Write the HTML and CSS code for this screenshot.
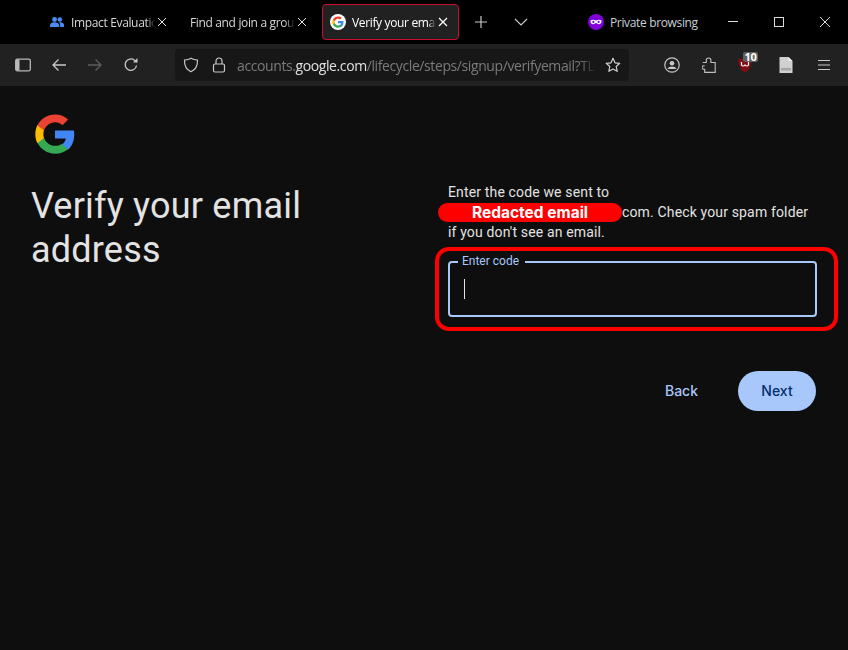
FILE: index.html
```html
<!DOCTYPE html>
<html lang="en">
<head>
    <meta charset="UTF-8">
    <title>Verify your email address</title>
    <link rel="stylesheet" href="styles.css">
</head>
<body>
    <div class="tabbar">
        <div class="tab tab-first">
            <svg class="tab-icon" width="14" height="13" viewBox="0 0 16 14"><circle cx="5.2" cy="3.6" r="2.8" fill="#4c8bf5"/><circle cx="11.2" cy="3.6" r="2.6" fill="#4c8bf5"/><path d="M0 12v-2c0-2 2.500-3.300 5.200-3.300S10.400 8 10.400 10v2z" fill="#4c8bf5"/><path d="M11.600 12v-2.200c0-1.200-.6-2.200-1.500-2.800.5-.2 1-.3 1.500-.3 2.200 0 4.400 1.200 4.400 3.100V12z" fill="#4c8bf5"/></svg>
            <span class="tab-title">Impact Evaluation</span>
            <svg class="tab-close" width="10" height="10" viewBox="0 0 10 10"><path d="M1 1l8 8M9 1l-8 8" stroke="#e6e6e6" stroke-width="1"/></svg>
        </div>
        <div class="tab tab-second">
            <span class="tab-title">Find and join a group</span>
            <svg class="tab-close" width="10" height="10" viewBox="0 0 10 10"><path d="M1 1l8 8M9 1l-8 8" stroke="#e6e6e6" stroke-width="1"/></svg>
        </div>
        <div class="tab tab-active">
            <span class="g-badge">
                <svg width="12" height="12" viewBox="0 0 48 48"><use href="#g-logo"/></svg>
            </span>
            <span class="tab-title">Verify your email</span>
            <svg class="tab-close" width="10" height="10" viewBox="0 0 10 10"><path d="M1 1l8 8M9 1l-8 8" stroke="#fff" stroke-width="1.200"/></svg>
        </div>
        <svg class="new-tab" width="14" height="14" viewBox="0 0 14 14"><path d="M7 1v12M1 7h12" stroke="#c8c8c8" stroke-width="1.200"/></svg>
        <svg class="tab-list" width="14" height="8" viewBox="0 0 14 8"><path d="M1 1l6 6 6-6" stroke="#c8c8c8" stroke-width="1.200" fill="none"/></svg>
        <div class="private">
            <svg width="16" height="16" viewBox="0 0 16 16"><circle cx="8" cy="8" r="8" fill="#8000d7"/><path d="M2.500 6.500c1.500-1 3.500-1 5.500 0 2-1 4-1 5.500 0 .3 2-.7 3.700-2.700 3.700-1.300 0-2-1.200-2.800-1.200s-1.500 1.200-2.800 1.200c-2 0-3-1.700-2.700-3.700z" fill="#fff"/><circle cx="5.400" cy="7.900" r="1.100" fill="#8000d7"/><circle cx="10.600" cy="7.900" r="1.100" fill="#8000d7"/></svg>
            <span>Private browsing</span>
        </div>
        <div class="window-controls">
            <svg width="12" height="12" viewBox="0 0 12 12"><path d="M1 5.500h10" stroke="#ddd" stroke-width="1"/></svg>
            <svg width="12" height="12" viewBox="0 0 12 12"><rect x="1.500" y="1.500" width="9" height="9" fill="none" stroke="#ddd" stroke-width="1"/></svg>
            <svg width="12" height="12" viewBox="0 0 12 12"><path d="M1 1l10 10M11 1L1 11" stroke="#ddd" stroke-width="1"/></svg>
        </div>
    </div>

    <div class="toolbar">
        <svg width="16" height="14" viewBox="0 0 16 14"><rect x=".7" y="1.200" width="14.600" height="11.600" rx="1.500" fill="none" stroke="#b8b8b8" stroke-width="1.300"/><rect x="1" y="1.500" width="3.500" height="11" fill="#b8b8b8"/></svg>
        <svg class="tool-back" width="16" height="14" viewBox="0 0 16 14"><path d="M15 7H2M7.500 1.500L2 7l5.500 5.500" stroke="#c8c8c8" stroke-width="1.300" fill="none"/></svg>
        <svg class="tool-forward" width="16" height="14" viewBox="0 0 16 14"><path d="M1 7h13M8.500 1.500L14 7l-5.500 5.500" stroke="#5c5c5c" stroke-width="1.300" fill="none"/></svg>
        <svg class="tool-reload" width="16" height="16" viewBox="0 0 16 16"><path d="M13.500 8.500A5.700 5.700 0 1 1 11.500 3.300L14 5" stroke="#c8c8c8" stroke-width="1.300" fill="none"/><path d="M14.500 1v4.500H10z" fill="#c8c8c8"/></svg>
        <div class="urlbar">
            <svg width="16" height="16" viewBox="0 0 16 16"><path d="M8 1.200c1.800 1.200 4 1.700 6.500 1.800.2 5.500-1.800 9.800-6.500 11.800C3.300 12.800 1.300 8.500 1.500 3 4 2.900 6.200 2.400 8 1.200z" fill="none" stroke="#c8c8c8" stroke-width="1.200"/></svg>
            <svg class="url-lock" width="14" height="16" viewBox="0 0 14 16"><rect x="1.500" y="7" width="11" height="8" rx="1.500" fill="none" stroke="#c8c8c8" stroke-width="1.200"/><path d="M4 7V4a3 3 0 0 1 6 0v3" fill="none" stroke="#c8c8c8" stroke-width="1.200"/></svg>
            <span class="url"><span class="url-dim">accounts.</span>google.com<span class="url-dim">/lifecycle/steps/signup/verifyemail?TL=AHE</span></span>
            <svg class="url-star" width="16" height="16" viewBox="0 0 16 16"><path d="M8 1.300l2 4.500 4.800.5-3.600 3.200 1 4.800L8 12l-4.200 2.300 1-4.800L1.200 6.300 6 5.800z" fill="none" stroke="#d0d0d0" stroke-width="1.200" stroke-linejoin="round"/></svg>
        </div>
        <div class="tool-right">
            <svg width="16" height="16" viewBox="0 0 16 16"><circle cx="8" cy="8" r="7.200" fill="none" stroke="#c8c8c8" stroke-width="1.200"/><circle cx="8" cy="6.300" r="2.300" fill="#c8c8c8"/><path d="M3.500 12c.7-1.700 2.400-2.500 4.500-2.500s3.800.8 4.500 2.500z" fill="#c8c8c8"/></svg>
            <svg class="tool-ext" width="14" height="16" viewBox="0 0 14 16"><path d="M.8 5.500h3.500V3.300a2.300 2.300 0 0 1 4.600 0v2.200h4.300V15.400H2.700v-3.200H1.500a1.800 1.800 0 0 1 0-3.500h1.200" fill="none" stroke="#c0c0c0" stroke-width="1.100"/></svg>
            <div class="ublock">
                <svg width="14" height="16" viewBox="0 0 14 16"><path d="M7 .5c2 1 4 1.500 6.500 1.500.3 6-1.500 11-6.500 13.500C2 13 .2 8 .5 2 3 2 5 1.500 7 .5z" fill="#800d14"/><path d="M3.500 5v2.500c0 1 .8 1.500 1.700 1.500S7 8.500 7 7.500c0 1 .9 1.500 1.800 1.500s1.700-.5 1.700-1.500V5" stroke="#fff" stroke-width="1.200" fill="none"/></svg>
                <span class="badge">10</span>
            </div>
            <svg class="tool-doc" width="14" height="16" viewBox="0 0 14 16"><path d="M.5 0h9l4 4v12H.5z" fill="#d0d0d0"/><path d="M9.500 0v4h4z" fill="#efefef"/><rect x="2" y="11" width="10" height="2.500" fill="#a5a5a5"/></svg>
            <svg class="tool-menu" width="12" height="12" viewBox="0 0 12 12"><path d="M0 1.500h12M0 6h12M0 10.500h12" stroke="#c8c8c8" stroke-width="1.200"/></svg>
        </div>
    </div>

    <svg class="defs" width="0" height="0">
        <defs>
            <g id="g-logo">
                <path fill="#4285f4" d="M46 24.500c0-1.600-.1-3.100-.4-4.500H24v9h12.400c-.5 2.900-2.100 5.300-4.500 6.900v5.800h7.300C43.500 37.700 46 31.700 46 24.500z"/>
                <path fill="#34a853" d="M24 46.500c6.100 0 11.200-2 14.900-5.500l-7.300-5.700c-2 1.400-4.600 2.200-7.600 2.200-5.900 0-10.800-4-12.600-9.300H3.900v5.900C7.600 41.500 15.200 46.500 24 46.500z"/>
                <path fill="#fbbc05" d="M11.400 28.700c-.5-1.400-.7-2.900-.7-4.500s.3-3.100.7-4.500v-5.900H3.900C2.300 17 1.500 20.500 1.500 24.200s.9 7.200 2.400 10.400z"/>
                <path fill="#ea4335" d="M24 10.500c3.300 0 6.300 1.100 8.600 3.400l6.400-6.400C35.100 3.900 30.100 1.800 24 1.800 15.200 1.800 7.600 6.900 3.900 14.200l7.500 5.900c1.800-5.300 6.700-9.600 12.600-9.600z"/>
            </g>
        </defs>
    </svg>

    <main class="page">
        <section class="intro">
            <svg class="logo" width="42" height="42" viewBox="0 0 48 48"><use href="#g-logo"/></svg>
            <h1>Verify your email address</h1>
        </section>
        <section class="form">
            <p class="notice">Enter the code we sent to<br><span class="redact">Redacted email</span>com. Check your spam folder<br>if you don't see an email.</p>
            <div class="highlight">
                <fieldset class="code-field">
                    <legend>Enter code</legend>
                    <span class="caret"></span>
                </fieldset>
            </div>
            <div class="actions">
                <span class="btn-back">Back</span>
                <span class="btn-next">Next</span>
            </div>
        </section>
    </main>
</body>
</html>
```

FILE: styles.css
```css
* {
    box-sizing: border-box;
}
body {
    margin: 0;
    width: 848px;
    height: 650px;
    overflow: hidden;
    background: #0e0e0e;
    font-family: "Open Sans", sans-serif;
    display: flex;
    flex-direction: column;
}
.defs {
    position: absolute;
}

/* tabs */
.tabbar {
    height: 44px;
    background: #000;
    display: flex;
    align-items: center;
    color: #d8d8d8;
    font-size: 12px;
    letter-spacing: -.35px;
}
.tab {
    display: flex;
    align-items: center;
    height: 36px;
}
.tab-first {
    margin-left: 50px;
    width: 117px;
}
.tab-second {
    margin-left: 23px;
    width: 117px;
}
.tab-active {
    margin-left: 15px;
    width: 137px;
    padding-left: 7px;
    background: #212121;
    border: 1px solid #c8102e;
    border-radius: 4px;
    color: #fff;
}
.tab-icon {
    margin-right: 7px;
    flex: none;
}
.tab-title {
    flex: 1;
    overflow: hidden;
    white-space: nowrap;
    -webkit-mask-image: linear-gradient(to right, #000 90%, transparent);
    mask-image: linear-gradient(to right, #000 90%, transparent);
}
.tab-close {
    flex: none;
    margin-left: 2px;
}
.tab-active .tab-close {
    margin-right: 10px;
}
.g-badge {
    width: 16px;
    height: 16px;
    margin-right: 6px;
    border-radius: 50%;
    background: #fff;
    display: flex;
    align-items: center;
    justify-content: center;
    flex: none;
}
.new-tab {
    margin-left: 15px;
}
.tab-list {
    margin-left: 26px;
}
.private {
    margin-left: 60px;
    display: flex;
    align-items: center;
    gap: 6px;
    color: #c8d0d8;
}
.window-controls {
    margin-left: 29px;
    display: flex;
    gap: 34px;
}

/* toolbar */
.toolbar {
    height: 42px;
    background: #212121;
    display: flex;
    align-items: center;
    padding-left: 15px;
}
.tool-back,
.tool-forward,
.tool-reload {
    margin-left: 20px;
}
.urlbar {
    margin-left: 36px;
    width: 454px;
    height: 32px;
    background: #171717;
    border-radius: 4px;
    display: flex;
    align-items: center;
    padding: 0 8px;
}
.url-lock {
    margin: 0 11px 0 13px;
}
.url {
    flex: 1;
    min-width: 0;
    margin-right: 8px;
    overflow: hidden;
    white-space: nowrap;
    font-size: 14px;
    letter-spacing: -.4px;
    color: #e0e0e0;
    -webkit-mask-image: linear-gradient(to right, #000 95%, transparent);
    mask-image: linear-gradient(to right, #000 95%, transparent);
}
.url-dim {
    color: #7b7b7b;
}
.url-star {
    flex: none;
}
.tool-right {
    margin-left: 35px;
    display: flex;
    align-items: center;
}
.tool-ext {
    margin-left: 22px;
}
.ublock {
    margin-left: 22px;
    position: relative;
    display: flex;
}
.tool-doc {
    margin-left: 27px;
}
.tool-menu {
    margin-left: 25px;
}
.badge {
    position: absolute;
    top: -5px;
    left: 5px;
    width: 15px;
    background: #5f5f5f;
    border-radius: 2px;
    color: #fff;
    font-size: 11px;
    font-weight: 700;
    letter-spacing: -.2px;
    line-height: 10px;
    text-align: center;
}

/* page */
.page {
    flex: 1;
    display: flex;
}
.intro {
    width: 448px;
    padding: 27px 0 0 31px;
}
.logo {
    display: block;
    margin: 0 0 0 3px;
}
h1 {
    margin: 29px 0 0;
    width: 300px;
    font-family: "Roboto", sans-serif;
    font-size: 36px;
    font-weight: 400;
    letter-spacing: .2px;
    line-height: 44px;
    color: #e3e3e3;
}
.form {
    width: 369px;
    padding-top: 96px;
}
.notice {
    margin: 0;
    font-family: "Roboto", sans-serif;
    font-size: 14px;
    letter-spacing: .15px;
    line-height: 20px;
    color: #e3e3e3;
}
.redact {
    display: inline-block;
    width: 184px;
    height: 19px;
    margin: 1px 0 0 -10px;
    background: #f00;
    border-radius: 10px;
    color: #fff;
    font-family: "Inter", sans-serif;
    font-weight: 700;
    font-size: 15.500px;
    letter-spacing: 0;
    line-height: 19px;
    text-align: center;
    vertical-align: top;
}
.highlight {
    margin: 5px -21px 0 -13px;
    height: 84px;
    padding: 9px 17px 0 9px;
    border: 4px solid #f00;
    border-radius: 14px;
}
.code-field {
    margin: -6px 0 0;
    padding: 0 14px;
    height: 63px;
    border: 2px solid #a8c7fa;
    border-radius: 4px;
    display: flex;
}
.code-field legend {
    padding: 0 6px 0 4px;
    margin-left: -6px;
    font-family: "Roboto", sans-serif;
    font-size: 12px;
    line-height: 15px;
    color: #a8c7fa;
}
.caret {
    display: block;
    width: 1px;
    height: 20px;
    margin-top: 10px;
    background: #e3e3e3;
}
.actions {
    margin-top: 40px;
    display: flex;
    align-items: center;
    justify-content: flex-end;
    font-family: "Inter", sans-serif;
    font-size: 14px;
    font-weight: 500;
}
.btn-back {
    color: #a8c7fa;
    margin: 0 40px 2px 0;
}
.btn-next {
    width: 78px;
    height: 40px;
    margin-right: 1px;
    padding-bottom: 1px;
    border-radius: 20px;
    background: #a8c7fa;
    color: #062e6f;
    display: flex;
    align-items: center;
    justify-content: center;
}
```
